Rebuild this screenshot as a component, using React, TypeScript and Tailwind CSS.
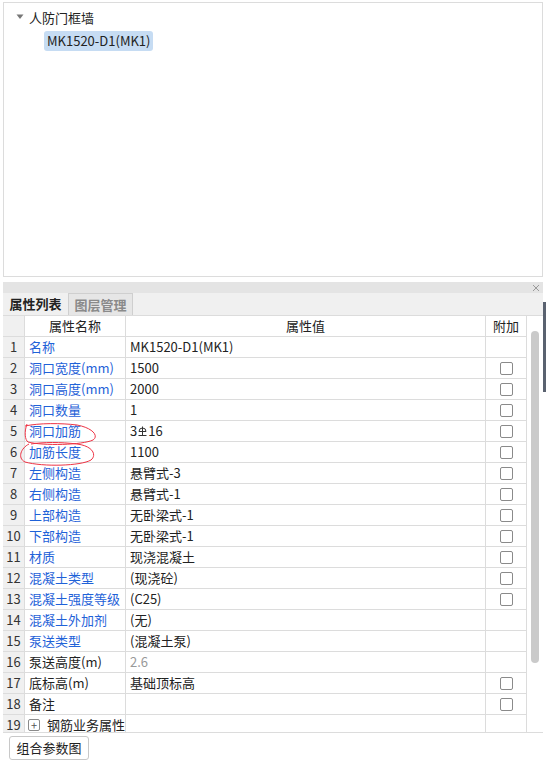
import { Fragment } from "react";

type Row = {
  name: string;
  value: string;
  blue?: boolean;
  check?: boolean;
  gray?: boolean;
  rebar?: boolean;
  group?: boolean;
};

const rows: Row[] = [
  { name: "名称", value: "MK1520-D1(MK1)", blue: true },
  { name: "洞口宽度(mm)", value: "1500", blue: true, check: true },
  { name: "洞口高度(mm)", value: "2000", blue: true, check: true },
  { name: "洞口数量", value: "1", blue: true, check: true },
  { name: "洞口加筋", value: "16", blue: true, check: true, rebar: true },
  { name: "加筋长度", value: "1100", blue: true, check: true },
  { name: "左侧构造", value: "悬臂式-3", blue: true, check: true },
  { name: "右侧构造", value: "悬臂式-1", blue: true, check: true },
  { name: "上部构造", value: "无卧梁式-1", blue: true, check: true },
  { name: "下部构造", value: "无卧梁式-1", blue: true, check: true },
  { name: "材质", value: "现浇混凝土", blue: true, check: true },
  { name: "混凝土类型", value: "(现浇砼)", blue: true, check: true },
  { name: "混凝土强度等级", value: "(C25)", blue: true, check: true },
  { name: "混凝土外加剂", value: "(无)", blue: true },
  { name: "泵送类型", value: "(混凝土泵)", blue: true },
  { name: "泵送高度(m)", value: "2.6", gray: true },
  { name: "底标高(m)", value: "基础顶标高", check: true },
  { name: "备注", value: "", check: true },
  { name: "钢筋业务属性", value: "", group: true },
];

function RebarMark() {
  return (
    <svg width="9" height="11" viewBox="0 0 9 11" className="mx-[1px] inline-block align-[-1px]">
      <path d="M1 5.5 A3.5 3.5 0 0 1 8 5.5" fill="none" stroke="#333" strokeWidth="1" />
      <path d="M4.5 0.5 V10" stroke="#333" strokeWidth="1" />
      <path d="M1 5.5 H8 M0.5 9.5 H8.5" stroke="#333" strokeWidth="1" />
    </svg>
  );
}

export default function App() {
  return (
    <div
      className="relative h-[764px] w-[546px] overflow-hidden bg-white text-[13px] text-[#222]"
      style={{ fontFamily: '"Noto Sans CJK SC", "Noto Sans", sans-serif' }}
    >
      {/* tree panel */}
      <div className="mx-[3px] mt-[2px] h-[275px] border border-[#dcdcdc] bg-white">
        <div className="flex h-[28px] items-center pl-[12px]">
          <svg width="8" height="6" viewBox="0 0 8 6" className="mr-[5px]">
            <path d="M0.5 0.5 H7.5 L4 5 Z" fill="#777" />
          </svg>
          <span className="leading-none">人防门框墙</span>
        </div>
        <div className="pl-[40px]">
          <span className="inline-block rounded-[3px] bg-[#c6dcf3] px-[3px] py-[1px] leading-[18px]">
            MK1520-D1(MK1)
          </span>
        </div>
      </div>

      {/* property panel */}
      <div className="mx-[3px] mt-[5px] w-[540px]">
        <div className="flex h-[11px] items-center justify-end bg-[#e4e4e4] pr-[3px]">
          <svg width="8" height="8" viewBox="0 0 8 8">
            <path d="M1 1 L7 7 M7 1 L1 7" stroke="#9a9a9a" strokeWidth="1" />
          </svg>
        </div>
        <div className="flex h-[23px] border-b border-[#dcdcdc] bg-[#f0f0f0]">
          <div className="flex w-[65px] items-center justify-center font-bold text-[#222]">属性列表</div>
          <div className="flex w-[65px] items-center justify-center border border-b-0 border-[#cfcfcf] bg-[#e6e6e6] font-bold text-[#8a8a8a]">
            图层管理
          </div>
        </div>

        <div className="relative flex h-[417px] overflow-hidden border-b border-[#dcdcdc]">
          <div className="grid w-[524px] grid-cols-[22px_101px_360px_41px] auto-rows-[21px]">
            <div className="border-b border-r border-[#dcdcdc] bg-[#f0f0f0]" />
            <div className="flex items-center justify-center border-b border-r border-[#dcdcdc]">属性名称</div>
            <div className="flex items-center justify-center border-b border-r border-[#dcdcdc]">属性值</div>
            <div className="flex items-center justify-center border-b border-r border-[#dcdcdc]">附加</div>
            {rows.map((r, i) => (
              <Fragment key={i}>
                <div className="flex items-center justify-center border-b border-r border-[#dcdcdc] bg-[#f0f0f0] text-[#333]">
                  {i + 1}
                </div>
                <div
                  className={`flex items-center border-b border-r border-[#dcdcdc] pl-[4px] ${r.blue ? "text-[#1f62d8]" : "text-[#222]"}`}
                >
                  {r.group && (
                    <span className="mr-[7px] ml-[-1px] flex h-[12px] w-[12px] items-center justify-center rounded-[2px] border border-[#8a8a8a] text-[11px] leading-none text-[#555]">
                      +
                    </span>
                  )}
                  {r.name}
                </div>
                <div
                  className={`flex items-center border-b border-r border-[#dcdcdc] pl-[4px] ${r.gray ? "text-[#999]" : "text-[#222]"}`}
                >
                  {r.rebar ? (
                    <>
                      3<RebarMark />
                      {r.value}
                    </>
                  ) : (
                    r.value
                  )}
                </div>
                <div className="flex items-center justify-center border-b border-r border-[#dcdcdc]">
                  {r.check && <span className="h-[13px] w-[13px] rounded-[2px] border border-[#8a8a8a] bg-white" />}
                </div>
              </Fragment>
            ))}
          </div>
          <div className="flex w-[16px] justify-center bg-white pt-[15px]">
            <div className="h-[332px] w-[8px] rounded-full bg-[#cacaca]" />
          </div>

          {/* red hand-drawn marks */}
          <svg className="pointer-events-none absolute left-0 top-0" width="120" height="170">
            <path
              d="M24 108 C21 116 22 124 25 126 C40 130 80 129 90 124 C96 120 90 112 74 109 C58 107 36 107 22 110"
              fill="none"
              stroke="#ee3344"
              strokeWidth="1"
            />
            <path
              d="M26 128 C18 132 14 142 22 146 C40 151 78 150 88 144 C94 139 90 130 74 128 C58 126 40 126 28 128"
              fill="none"
              stroke="#ee3344"
              strokeWidth="1"
            />
          </svg>
        </div>

        <div className="pt-[3px] pl-[6px]">
          <button className="h-[24px] w-[80px] rounded-[3px] border border-[#c8c8c8] bg-white text-[13px] text-[#222]">
            组合参数图
          </button>
        </div>
      </div>

      <div className="absolute right-0 top-[302px] h-[90px] w-[3px] bg-[#5a6270]" />
    </div>
  );
}
